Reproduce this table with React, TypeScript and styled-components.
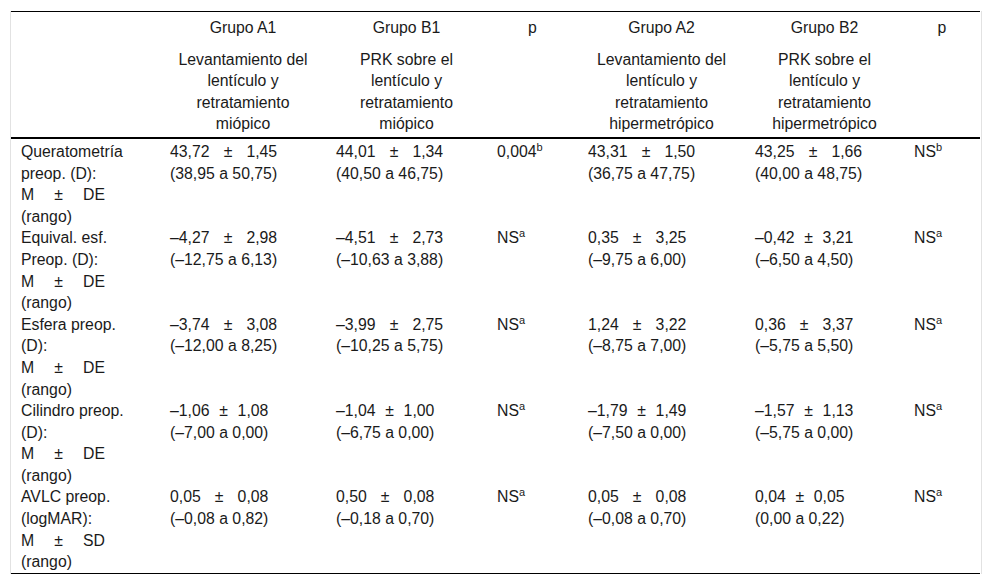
import React from 'react'
import styled, { createGlobalStyle } from 'styled-components'

const GlobalStyle = createGlobalStyle`
  html, body {
    margin: 0;
    padding: 0;
    background: #ffffff;
  }
  body {
    font-family: "Liberation Sans", Arial, Helvetica, sans-serif;
    color: #1a1a1a;
  }
`

const Page = styled.div`
  padding: 11px 11px 0 10px;
`

const Frame = styled.div`
  width: 970px;
  border-left: 1px solid #e2e2e2;
  border-right: 1px solid #e2e2e2;
`

const Table = styled.table`
  width: 969px;
  table-layout: fixed;
  border-collapse: collapse;
  font-size: 15.8px;
  line-height: 21.6px;
  border-top: 1px solid #000;
  border-bottom: 1px solid #000;
`

const HeadCell = styled.th<{ $last?: boolean }>`
  font-weight: normal;
  text-align: center;
  vertical-align: top;
  padding: ${({ $last }) => ($last ? '5px 10px 2px' : '5px 10px 5px')};
  border-bottom: ${({ $last }) => ($last ? '2px solid #000' : 'none')};
`

const Cell = styled.td<{ $first?: boolean }>`
  text-align: left;
  vertical-align: top;
  padding: ${({ $first }) => ($first ? '2px 10px 0' : '0 10px')};
`

const Spread = styled.span<{ $width?: number }>`
  display: flex;
  justify-content: space-between;
  width: ${({ $width }) => ($width ? `${$width}px` : 'auto')};
`

const Value = styled.span`
  display: inline-grid;
`

const Sup = styled.sup`
  font-size: 11px;
  line-height: 0;
  vertical-align: 6px;
`

const columns = [149, 166, 161, 91, 167, 159, 76]

type Stat = [string, string, string]

type Row = {
  label: [string, string]
  measure: string
  a1: Stat
  b1: Stat
  p1: [string, string]
  a2: Stat
  b2: Stat
  p2: [string, string]
}

const rows: Row[] = [
  {
    label: ['Queratometría', 'preop. (D):'],
    measure: 'DE',
    a1: ['43,72', '1,45', '(38,95 a 50,75)'],
    b1: ['44,01', '1,34', '(40,50 a 46,75)'],
    p1: ['0,004', 'b'],
    a2: ['43,31', '1,50', '(36,75 a 47,75)'],
    b2: ['43,25', '1,66', '(40,00 a 48,75)'],
    p2: ['NS', 'b']
  },
  {
    label: ['Equival. esf.', 'Preop. (D):'],
    measure: 'DE',
    a1: ['–4,27', '2,98', '(–12,75 a 6,13)'],
    b1: ['–4,51', '2,73', '(–10,63 a 3,88)'],
    p1: ['NS', 'a'],
    a2: ['0,35', '3,25', '(–9,75 a 6,00)'],
    b2: ['–0,42', '3,21', '(–6,50 a 4,50)'],
    p2: ['NS', 'a']
  },
  {
    label: ['Esfera preop.', '(D):'],
    measure: 'DE',
    a1: ['–3,74', '3,08', '(–12,00 a 8,25)'],
    b1: ['–3,99', '2,75', '(–10,25 a 5,75)'],
    p1: ['NS', 'a'],
    a2: ['1,24', '3,22', '(–8,75 a 7,00)'],
    b2: ['0,36', '3,37', '(–5,75 a 5,50)'],
    p2: ['NS', 'a']
  },
  {
    label: ['Cilindro preop.', '(D):'],
    measure: 'DE',
    a1: ['–1,06', '1,08', '(–7,00 a 0,00)'],
    b1: ['–1,04', '1,00', '(–6,75 a 0,00)'],
    p1: ['NS', 'a'],
    a2: ['–1,79', '1,49', '(–7,50 a 0,00)'],
    b2: ['–1,57', '1,13', '(–5,75 a 0,00)'],
    p2: ['NS', 'a']
  },
  {
    label: ['AVLC preop.', '(logMAR):'],
    measure: 'SD',
    a1: ['0,05', '0,08', '(–0,08 a 0,82)'],
    b1: ['0,50', '0,08', '(–0,18 a 0,70)'],
    p1: ['NS', 'a'],
    a2: ['0,05', '0,08', '(–0,08 a 0,70)'],
    b2: ['0,04', '0,05', '(0,00 a 0,22)'],
    p2: ['NS', 'a']
  }
]

const groups = [
  { title: 'Grupo A1', lines: ['Levantamiento del', 'lentículo y', 'retratamiento', 'miópico'] },
  { title: 'Grupo B1', lines: ['PRK sobre el', 'lentículo y', 'retratamiento', 'miópico'] },
  { title: 'Grupo A2', lines: ['Levantamiento del', 'lentículo y', 'retratamiento', 'hipermetrópico'] },
  { title: 'Grupo B2', lines: ['PRK sobre el', 'lentículo y', 'retratamiento', 'hipermetrópico'] }
]

function Lines({ lines }: { lines: string[] }) {
  return (
    <>
      {lines.map((line, i) => (
        <React.Fragment key={i}>
          {i > 0 && <br />}
          {line}
        </React.Fragment>
      ))}
    </>
  )
}

function StatValue({ stat }: { stat: Stat }) {
  return (
    <Value>
      <Spread>
        <span>{stat[0]}</span>
        <span>±</span>
        <span>{stat[1]}</span>
      </Spread>
      <span>{stat[2]}</span>
    </Value>
  )
}

function PValue({ p }: { p: [string, string] }) {
  return (
    <>
      {p[0]}
      <Sup>{p[1]}</Sup>
    </>
  )
}

export default function App() {
  return (
    <Page>
      <GlobalStyle />
      <Frame>
        <Table>
          <colgroup>
            {columns.map((w, i) => (
              <col key={i} style={{ width: w }} />
            ))}
          </colgroup>
          <thead>
            <tr>
              <HeadCell />
              <HeadCell>{groups[0].title}</HeadCell>
              <HeadCell>{groups[1].title}</HeadCell>
              <HeadCell>p</HeadCell>
              <HeadCell>{groups[2].title}</HeadCell>
              <HeadCell>{groups[3].title}</HeadCell>
              <HeadCell>p</HeadCell>
            </tr>
            <tr>
              <HeadCell $last />
              <HeadCell $last>
                <Lines lines={groups[0].lines} />
              </HeadCell>
              <HeadCell $last>
                <Lines lines={groups[1].lines} />
              </HeadCell>
              <HeadCell $last />
              <HeadCell $last>
                <Lines lines={groups[2].lines} />
              </HeadCell>
              <HeadCell $last>
                <Lines lines={groups[3].lines} />
              </HeadCell>
              <HeadCell $last />
            </tr>
          </thead>
          <tbody>
            {rows.map((row, i) => (
              <tr key={row.label[0]}>
                <Cell $first={i === 0}>
                  <Lines lines={row.label} />
                  <Spread $width={84}>
                    <span>M</span>
                    <span>±</span>
                    <span>{row.measure}</span>
                  </Spread>
                  (rango)
                </Cell>
                <Cell $first={i === 0}>
                  <StatValue stat={row.a1} />
                </Cell>
                <Cell $first={i === 0}>
                  <StatValue stat={row.b1} />
                </Cell>
                <Cell $first={i === 0}>
                  <PValue p={row.p1} />
                </Cell>
                <Cell $first={i === 0}>
                  <StatValue stat={row.a2} />
                </Cell>
                <Cell $first={i === 0}>
                  <StatValue stat={row.b2} />
                </Cell>
                <Cell $first={i === 0}>
                  <PValue p={row.p2} />
                </Cell>
              </tr>
            ))}
          </tbody>
        </Table>
      </Frame>
    </Page>
  )
}
